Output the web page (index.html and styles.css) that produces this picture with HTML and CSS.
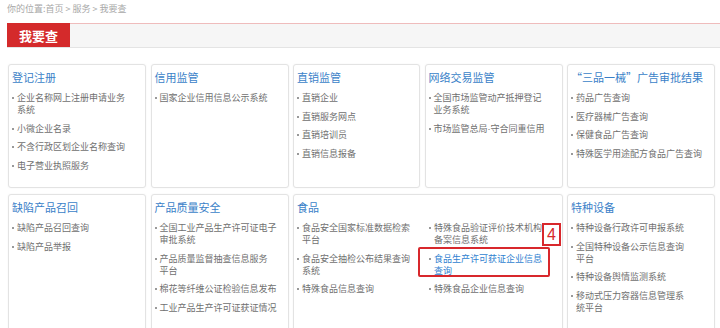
FILE: index.html
```html
<!DOCTYPE html>
<html lang="zh-CN">
<head>
  <meta charset="UTF-8">
  <title>我要查</title>
  <link rel="stylesheet" href="styles.css">
</head>
<body>
  <div class="page">
    <div class="crumb">你的位置:首页 &gt; 服务 &gt; 我要查</div>
    <div class="tabbar"><span class="tab">我要查</span></div>
    <div class="grid">
      <div class="card">
        <h3>登记注册</h3>
        <ul>
          <li>企业名称网上注册申请业务<br>系统</li>
          <li>小微企业名录</li>
          <li>不含行政区划企业名称查询</li>
          <li>电子营业执照服务</li>
        </ul>
      </div>
      <div class="card">
        <h3>信用监管</h3>
        <ul>
          <li>国家企业信用信息公示系统</li>
        </ul>
      </div>
      <div class="card">
        <h3>直销监管</h3>
        <ul>
          <li>直销企业</li>
          <li>直销服务网点</li>
          <li>直销培训员</li>
          <li>直销信息报备</li>
        </ul>
      </div>
      <div class="card">
        <h3>网络交易监管</h3>
        <ul>
          <li>全国市场监管动产抵押登记<br>业务系统</li>
          <li><span>市场监管总局<span class="dot">·</span>守合同重信用</span></li>
        </ul>
      </div>
      <div class="card">
        <h3>“三品一械”广告审批结果</h3>
        <ul>
          <li>药品广告查询</li>
          <li>医疗器械广告查询</li>
          <li>保健食品广告查询</li>
          <li>特殊医学用途配方食品广告查询</li>
        </ul>
      </div>

      <div class="card">
        <h3>缺陷产品召回</h3>
        <ul>
          <li>缺陷产品召回查询</li>
          <li>缺陷产品举报</li>
        </ul>
      </div>
      <div class="card">
        <h3>产品质量安全</h3>
        <ul>
          <li>全国工业产品生产许可证电子<br>审批系统</li>
          <li>产品质量监督抽查信息服务<br>平台</li>
          <li>棉花等纤维公证检验信息发布</li>
          <li>工业产品生产许可证获证情况</li>
        </ul>
      </div>
      <div class="card food">
        <h3>食品</h3>
        <ul class="cols">
          <li>食品安全国家标准数据检索<br>平台</li>
          <li>特殊食品验证评价技术机构<br>备案信息系统</li>
          <li>食品安全抽检公布结果查询<br>系统</li>
          <li class="hl">食品生产许可获证企业信息<br>查询<span class="badge">4</span></li>
          <li>特殊食品信息查询</li>
          <li>特殊食品企业信息查询</li>
        </ul>
      </div>
      <div class="card">
        <h3>特种设备</h3>
        <ul>
          <li>特种设备行政许可申报系统</li>
          <li>全国特种设备公示信息查询<br>平台</li>
          <li>特种设备舆情监测系统</li>
          <li>移动式压力容器信息管理系<br>统平台</li>
        </ul>
      </div>
    </div>
  </div>
</body>
</html>
```

FILE: styles.css
```css
body {
  margin: 0;
  font-family: "Noto Sans CJK SC", "Liberation Sans", sans-serif;
  background: #fff;
  color: #707070;
  overflow: hidden;
}
.page {
  padding-left: 7px;
}
.crumb {
  font-size: 9px;
  line-height: 12px;
  padding-top: 3px;
  color: #a8a8a8;
}
.tabbar {
  display: flex;
  margin-top: 8px;
  height: 25px;
  box-sizing: border-box;
  background: #f6f6f6;
  border-top: 1px solid #efbcbc;
  border-bottom: 1px solid #e4e4e4;
}
.tab {
  width: 63px;
  margin-top: -1px;
  background: #d42a2b;
  color: #fff;
  font-size: 13px;
  font-weight: bold;
  line-height: 25px;
  text-align: center;
}
.grid {
  display: grid;
  grid-template-columns: 138px 138px 127px 138px 148px;
  grid-template-rows: 124px 150px;
  column-gap: 4.5px;
  row-gap: 6px;
  margin: 16px 0 0 1px;
}
.card {
  border: 1px solid #e3e3e3;
  border-radius: 3px;
  padding: 5px 6px 0 3px;
  box-shadow: 0 0 2px rgba(0, 0, 0, 0.05);
  background: #fff;
}
.card h3 {
  margin: 0;
  font-size: 11px;
  line-height: 14px;
  font-weight: normal;
  color: #3a7fc8;
}
.card ul {
  list-style: none;
  margin: 8px 0 0;
  padding: 0;
}
.card li {
  display: flex;
  font-size: 9px;
  line-height: 12px;
  margin-bottom: 6.5px;
}
.card li::before {
  content: "";
  flex: none;
  width: 2px;
  height: 2px;
  margin: 5px 3px 0 0;
  background: #999;
}
.dot {
  font-family: "Liberation Sans", sans-serif;
}
.food {
  grid-column: span 2;
}
.cols {
  display: grid;
  grid-template-columns: 132px 1fr;
}
.hl {
  position: relative;
  color: #2f7fd0;
}
.hl::after {
  content: "";
  position: absolute;
  left: -11px;
  top: -6px;
  width: 132px;
  height: 30px;
  box-sizing: border-box;
  border: 2px solid #d8282c;
  border-radius: 2px;
}
.badge {
  position: absolute;
  left: 113px;
  top: -30px;
  width: 19px;
  height: 23px;
  box-sizing: border-box;
  border: 2px solid #d8282c;
  background: #fff;
  color: #d8282c;
  font-family: "Liberation Sans", sans-serif;
  font-size: 16px;
  line-height: 19px;
  text-align: center;
}
```
